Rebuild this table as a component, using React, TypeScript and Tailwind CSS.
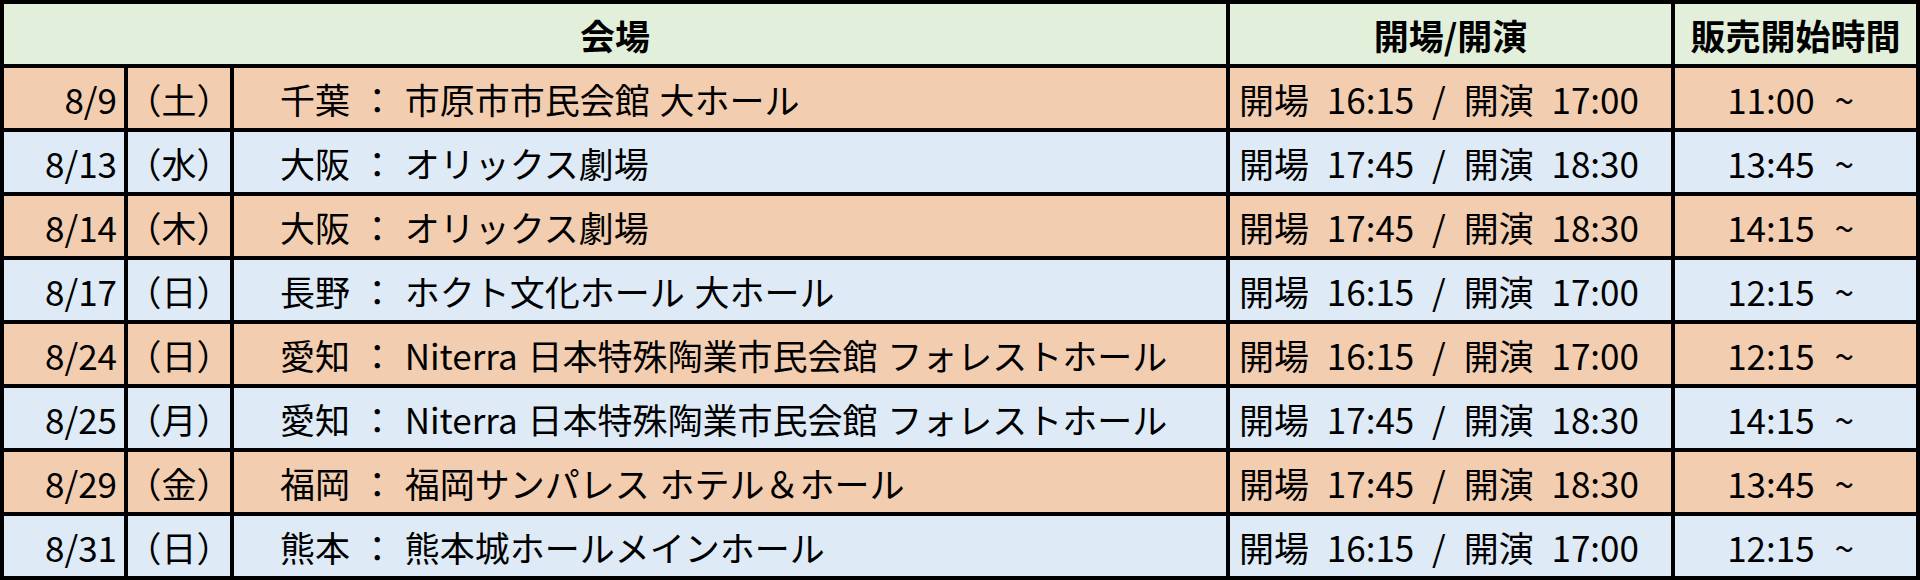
import React from "react";

type Row = { date: string; day: string; venue: string; time: string; sale: string };

const rows: Row[] = [
  { date: "8/9", day: "（土）", venue: "千葉 ： 市原市市民会館 大ホール", time: "開場 16:15 / 開演 17:00", sale: "11:00 ~" },
  { date: "8/13", day: "（水）", venue: "大阪 ： オリックス劇場", time: "開場 17:45 / 開演 18:30", sale: "13:45 ~" },
  { date: "8/14", day: "（木）", venue: "大阪 ： オリックス劇場", time: "開場 17:45 / 開演 18:30", sale: "14:15 ~" },
  { date: "8/17", day: "（日）", venue: "長野 ： ホクト文化ホール 大ホール", time: "開場 16:15 / 開演 17:00", sale: "12:15 ~" },
  { date: "8/24", day: "（日）", venue: "愛知 ： Niterra 日本特殊陶業市民会館 フォレストホール", time: "開場 16:15 / 開演 17:00", sale: "12:15 ~" },
  { date: "8/25", day: "（月）", venue: "愛知 ： Niterra 日本特殊陶業市民会館 フォレストホール", time: "開場 17:45 / 開演 18:30", sale: "14:15 ~" },
  { date: "8/29", day: "（金）", venue: "福岡 ： 福岡サンパレス ホテル＆ホール", time: "開場 17:45 / 開演 18:30", sale: "13:45 ~" },
  { date: "8/31", day: "（日）", venue: "熊本 ： 熊本城ホールメインホール", time: "開場 16:15 / 開演 17:00", sale: "12:15 ~" },
];

export default function App() {
  return (
    <div
      className="w-[1920px] h-[580px] bg-black p-[4px] text-black text-[35px] leading-none"
      style={{ fontFamily: '"Noto Sans CJK JP", "Noto Sans", sans-serif' }}
    >
      <div className="grid grid-cols-[120px_102px_992px_441px_241px] grid-rows-[repeat(9,60px)] gap-[4px]">
        <div className="col-span-3 bg-[#E2EFDA] flex items-center justify-center font-bold">会場</div>
        <div className="bg-[#E2EFDA] flex items-center justify-center font-bold whitespace-nowrap">開場/開演</div>
        <div className="bg-[#E2EFDA] flex items-center justify-center font-bold whitespace-nowrap">販売開始時間</div>
        {rows.map((r, i) => {
          const bg = i % 2 === 0 ? "bg-[#F3CDAF]" : "bg-[#DEEAF6]";
          return (
            <React.Fragment key={i}>
              <div className={`${bg} flex items-center justify-end pr-[7px] whitespace-nowrap`}>{r.date}</div>
              <div className={`${bg} flex items-center justify-center whitespace-nowrap`}>{r.day}</div>
              <div className={`${bg} flex items-center pl-[46px] whitespace-nowrap [word-spacing:2px]`}>{r.venue}</div>
              <div className={`${bg} flex items-center pl-[9px] whitespace-nowrap [word-spacing:10px]`}>{r.time}</div>
              <div className={`${bg} flex items-center justify-center whitespace-nowrap pr-[10px] [word-spacing:12px]`}>{r.sale}</div>
            </React.Fragment>
          );
        })}
      </div>
    </div>
  );
}
